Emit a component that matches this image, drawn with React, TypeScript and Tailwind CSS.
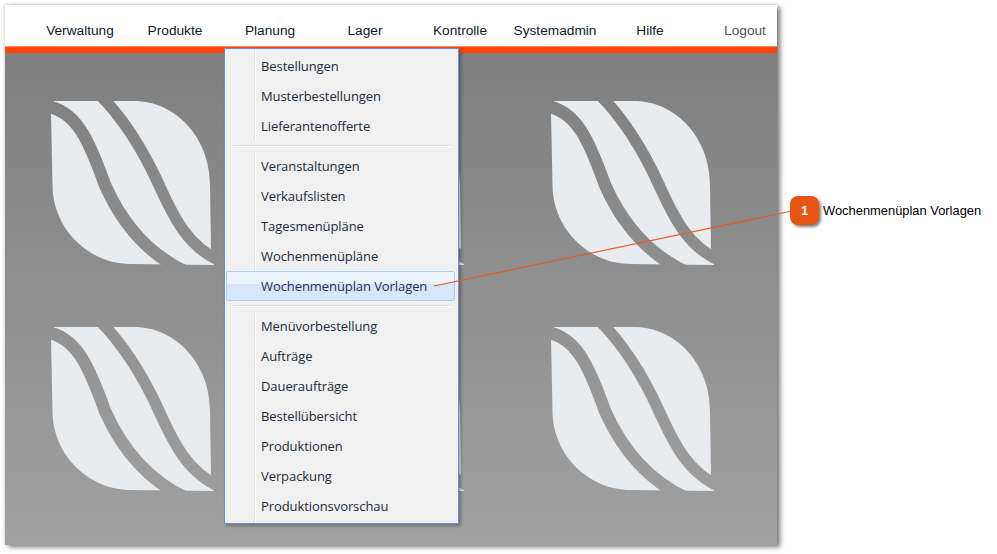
const nav = ["Verwaltung", "Produkte", "Planung", "Lager", "Kontrolle", "Systemadmin", "Hilfe"];
const groups = [
  ["Bestellungen", "Musterbestellungen", "Lieferantenofferte"],
  ["Veranstaltungen", "Verkaufslisten", "Tagesmenüpläne", "Wochenmenüpläne", "Wochenmenüplan Vorlagen"],
  ["Menüvorbestellung", "Aufträge", "Daueraufträge", "Bestellübersicht", "Produktionen", "Verpackung", "Produktionsvorschau"],
];
const ACTIVE = "Wochenmenüplan Vorlagen";

const silhouette =
  "M3 1 L83 1 C125 1 159 38 159 85 L160 150 L163 165 L80 164 C37 164 1.5 128 1.5 85 L0 12 Z";
const gapLeft = "M-6 6 C25 10 38 40 54 85 C66 112 88 150 135 172";
const gapRight = "M48 -6 C72 18 93 52 108 85 C120 111 135 147 170 161";

function MenuRow({ label }: { label: string }) {
  if (label === ACTIVE) {
    return (
      <div className="relative mx-px flex h-[30px] w-[229px] items-center rounded-[2px] border border-[#aecdf8] bg-[linear-gradient(#edf4fe_0%,#ebf3fd_42%,#d6e6fb_44%,#d6e6fb_100%)] pl-[34px] pt-[2px]">
        <span className="text-[#1f3050]">{label}</span>
      </div>
    );
  }
  return (
    <div className="flex h-[30px] items-center pl-[36px] pt-[2px]">
      <span>{label}</span>
    </div>
  );
}

export default function App() {
  return (
    <div className="relative h-[554px] w-[997px] overflow-hidden bg-white pl-[5px] pt-[5px] font-['Liberation_Sans',Arial,sans-serif]">
      <div className="flex h-[540px] w-[772px] flex-col shadow-[3px_2px_5px_rgba(0,0,0,0.55),-1px_-1px_2px_rgba(0,0,0,0.1)]">
        <header className="flex h-[41px] shrink-0 items-center overflow-hidden bg-white pl-[27.5px] pt-[12px] text-[13.7px] text-[#111827]">
          {nav.map((n) => (
            <div key={n} className="w-[95px] shrink-0 text-center">{n}</div>
          ))}
          <div className="w-[95px] shrink-0 text-center text-[#555555]">Logout</div>
        </header>
        <div className="h-[7px] shrink-0 border-t border-[#ff8a6c] bg-[#ff4309]" />
        <main className="relative min-h-0 flex-1 bg-[linear-gradient(#7f7f7f,#a1a1a1)]">
          <svg className="absolute inset-0" width="772" height="492" viewBox="5 53 772 492">
            <defs>
              <mask id="leaf-gaps" maskUnits="userSpaceOnUse" x="-10" y="-10" width="190" height="190">
                <rect x="-10" y="-10" width="190" height="190" fill="white" />
                <path d={gapLeft} fill="none" stroke="black" strokeWidth="12.5" />
                <path d={gapRight} fill="none" stroke="black" strokeWidth="11.5" />
              </mask>
            </defs>
            {[51, 301, 551].map((x) =>
              [100, 326].map((y) => (
                <g key={`${x}-${y}`} transform={`translate(${x} ${y})`}>
                  <path d={silhouette} fill="#e9ecef" mask="url(#leaf-gaps)" />
                </g>
              )),
            )}
          </svg>
        </main>
      </div>

      {/* dropdown */}
      <div className="absolute left-[224px] top-[48px] w-[235px] border border-[#6d8fc6] bg-[#f0f0f0] py-[2px] font-['Open_Sans',sans-serif] text-[13px] tracking-[-0.08px] text-[#222b38] shadow-[2px_2px_3px_rgba(0,0,0,0.3)]">
        <div className="absolute bottom-0 left-[29px] top-0 w-[2px] border-l border-r border-l-[#e2e3e3] border-r-white" />
        {groups.map((g, i) => (
          <div key={i} className="relative">
            {g.map((l) => <MenuRow key={l} label={l} />)}
            {i < groups.length - 1 && (
              <div className="flex h-[10px] items-center bg-[#f0f0f0] px-[6px]">
                <div className="h-[2px] w-[220px] border-t border-b border-t-[#e0e0e0] border-b-white" />
              </div>
            )}
          </div>
        ))}
      </div>

      {/* callout line */}
      <svg className="absolute left-0 top-0" width="997" height="554">
        <line x1="434" y1="286" x2="792" y2="211" stroke="#e8581c" strokeWidth="1.1" />
      </svg>

      {/* callout */}
      <div className="absolute left-[790px] top-[196px] flex items-center gap-[4px]">
        <div className="flex h-[29px] w-[29px] items-center justify-center rounded-[8px] bg-[#ea5413] text-[13px] font-bold text-white shadow-[2px_2px_3px_rgba(0,0,0,0.5)]">1</div>
        <span className="text-[12.9px] text-black">Wochenmenüplan Vorlagen</span>
      </div>
    </div>
  );
}
